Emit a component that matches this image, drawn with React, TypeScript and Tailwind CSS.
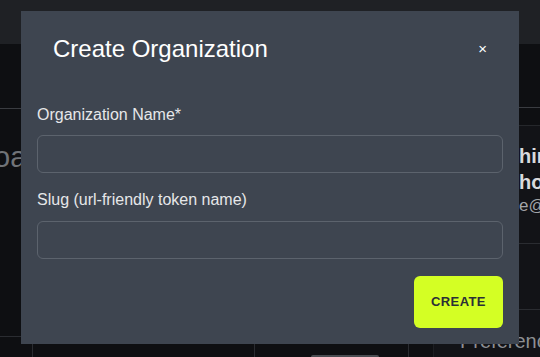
import React from "react";

export default function App() {
  return (
    <div
      className="relative w-[540px] h-[357px] overflow-hidden bg-[#0e0f12] text-white"
      style={{ fontFamily: '"Liberation Sans", Arial, sans-serif' }}
    >
      {/* dimmed background page */}
      <div className="h-[44px] bg-[#1f2125]" />
      <div className="flex h-[313px]">
        <div className="w-[433px] shrink-0 flex flex-col">
          <div className="h-[65px] border-b border-[#3a3c41]" />
          <div className="flex-1 pt-[30px]">
            <div className="text-[29px] leading-[36px] text-[#707378] -ml-[6px]">oa</div>
          </div>
          <div className="h-[21px] border-t border-[#2a2c31] flex">
            <div className="w-[33px] border-r border-[#2a2c31]" />
            <div className="w-[222px] border-r border-[#2a2c31]" />
            <div className="w-[154px] border-r border-[#2a2c31] relative">
              <div className="absolute left-[56px] bottom-0 w-[68px] h-[2px] bg-[#4a4d52] rounded-t" />
            </div>
            <div className="flex-1" />
          </div>
        </div>
        <div className="flex-1 min-w-0 overflow-hidden flex flex-col border-l border-[#1c1e22]">
          <div className="h-[64px] border-b border-[#3a3c41]" />
          <div className="h-[18px] border-b border-[#25272b]" />
          <div className="h-[118px] border-b border-[#2a2c31] bg-[#121317] pl-[85px] pt-[16px]">
            <div className="text-[20px] leading-[28px] font-bold text-[#d9dadc] whitespace-nowrap">hir</div>
            <div className="text-[20px] leading-[24px] font-bold text-[#d9dadc] whitespace-nowrap">ho</div>
            <div className="text-[17px] leading-[24px] text-[#a3a5a9] whitespace-nowrap">e@</div>
          </div>
          <div className="h-[66px] border-b border-[#2a2c31] bg-[#121317]" />
          <div className="flex-1 bg-[#121317] pl-[26px] pt-[19px]">
            <div className="text-[20px] leading-[24px] text-[#8d8f93] whitespace-nowrap">Preferences</div>
          </div>
        </div>
      </div>

      {/* modal */}
      <div className="absolute left-[21px] top-[11px] w-[498px] h-[333px] bg-[#3e4550] flex flex-col">
        <div className="h-[76px] flex items-center justify-between px-8">
          <div className="text-[24px] leading-[30px] text-white">Create Organization</div>
          <div className="text-[15px] leading-[16px] text-white">×</div>
        </div>
        <div className="px-4 flex flex-col">
          <div className="mt-[18px] text-[16px] leading-[20px] text-[#e6e7e9]">Organization Name*</div>
          <div className="mt-[10px] h-[38px] rounded-md border border-[#5c636d]" />
          <div className="mt-[17px] text-[16px] leading-[20px] text-[#e6e7e9]">Slug (url-friendly token name)</div>
          <div className="mt-[11px] h-[38px] rounded-md border border-[#5c636d]" />
          <div className="mt-[17px] flex justify-end">
            <div className="w-[89px] h-[52px] rounded-md bg-[#d4ff24] flex items-center justify-center text-[13px] tracking-[0.4px] font-bold text-[#2b2f36]">
              CREATE
            </div>
          </div>
        </div>
      </div>
    </div>
  );
}
